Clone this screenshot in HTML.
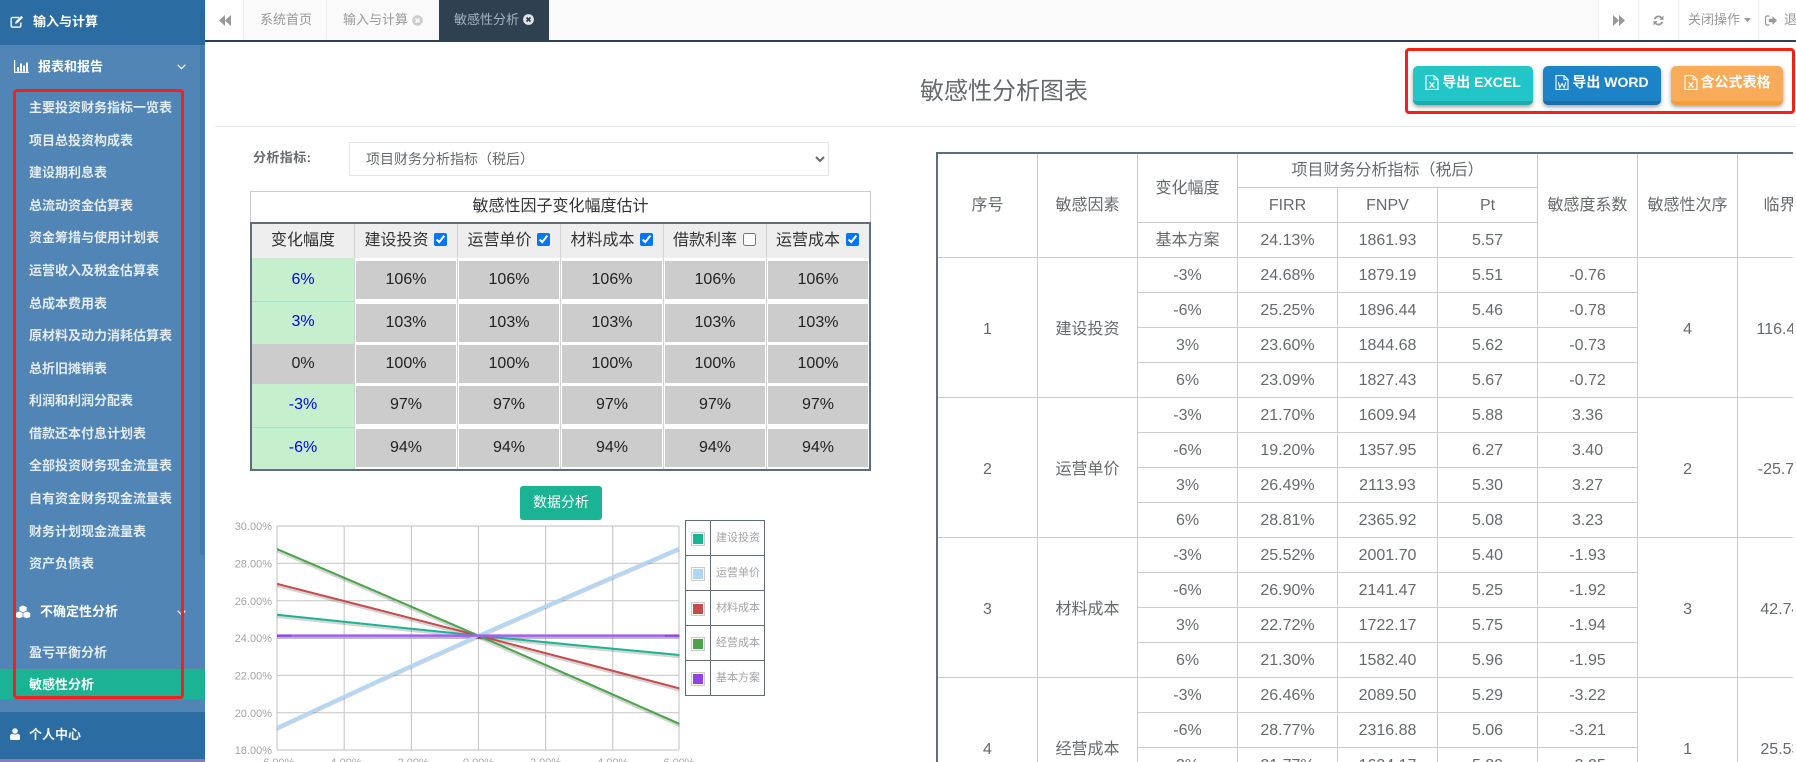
<!DOCTYPE html>
<html lang="zh"><head><meta charset="utf-8"><title>敏感性分析图表</title>
<style>
*{box-sizing:border-box}
html,body{margin:0;padding:0;width:1796px;height:762px;overflow:hidden}
body{position:relative;background:#fff;font-family:"Liberation Sans","Noto Sans CJK SC",sans-serif;color:#676a6c}
#root{position:absolute;left:0;top:0;width:1796px;height:762px;overflow:hidden;background:#fff}
.a{position:absolute;white-space:nowrap}
#side{position:absolute;left:0;top:0;width:205px;height:762px;background:#5185b5;overflow:hidden}
#side .blk{position:absolute;left:0;width:205px;background:#2b6ca3}
#side .t{position:absolute;white-space:nowrap;font-size:13px;font-weight:700;line-height:32px;height:32px;color:#e3ebf3}
#side .w{color:#fff}
#tabs{position:absolute;left:205px;top:0;width:1591px;height:42px;background:#fafafa;border-bottom:2px solid #2f4050}
.tb{position:absolute;top:0;height:40px;line-height:39px;font-size:13px;color:#999;white-space:nowrap}
.tbb{background:#fff;border-left:1px solid #eee}
.btn{position:absolute;top:66px;height:39px;border-radius:5px;color:#fff;font-size:14px;font-weight:700;display:flex;align-items:center;justify-content:center;gap:3px;padding-bottom:3px;box-shadow:0 2px 4px rgba(0,0,0,.38)}
.redbox{position:absolute;border:3px solid #f5201a;border-radius:4px;pointer-events:none}
.c{position:absolute;text-align:center;font-size:16px;color:#222}
.g{background:#ccc}
.gr{background:#c6efce;color:#00f}
.r1{top:261px;height:38px;line-height:38px}
.r2{top:304px;height:38px;line-height:38px}
.r3{top:345px;height:38px;line-height:38px}
.r4{top:386px;height:38px;line-height:38px}
.r5{top:429px;height:38px;line-height:38px}
.k1{left:356px;width:100px}.k2{left:459px;width:100px}.k3{left:562px;width:100px}.k4{left:665px;width:100px}.k5{left:768px;width:100px}
.f1{left:252px;width:102px;top:258px;height:43px;line-height:43px}
.f2{left:252px;width:102px;top:301px;height:43px;line-height:42px}
.f3{left:252px;width:102px;top:344px;height:40px;line-height:39px}
.f4{left:252px;width:102px;top:384px;height:43px;line-height:42px}
.f5{left:252px;width:102px;top:427px;height:42px;line-height:42px}
.vl{position:absolute;width:1px;top:224px;height:245px;background:#d4d4d4}
.hd{position:absolute;top:224px;height:34px;line-height:33px;font-size:16px;color:#333;white-space:nowrap}
input[type=checkbox]{position:absolute;margin:0;width:13px;height:13px;top:233px}
#rw{position:absolute;left:936px;top:152px;width:857px;height:610px;overflow:hidden}
#rt{position:absolute;left:0;top:0;width:900.500px;border-collapse:collapse;table-layout:fixed;border-top:2px solid #5f6c7b;border-left:2px solid #5f6c7b;font-size:16px;color:#676a6c}
#rt td{border:1px solid #ccc;text-align:center;padding:2px 0 0;height:35px;line-height:20px;overflow:hidden;white-space:nowrap}
#rt td[rowspan="4"]{padding-top:5px}
#rt tr:first-child td{height:34px;border-top:0}
#lg{position:absolute;left:685px;top:520px;width:80px;height:176px;border:1px solid #5f6c7b}
#lg .row{position:absolute;left:0;width:78px;height:35px;border-bottom:1px solid #5f6c7b;font-size:11px;color:#a5a5a5;line-height:34px}
#lg .row:last-child{border-bottom:0}
#lg .row span{position:absolute;left:30px;white-space:nowrap}
#lg .sw{position:absolute;left:5px;top:11px;width:14px;height:14px;border:1px solid #ccc;padding:1px;background:#fff}
#lg .sw i{display:block;width:10px;height:10px}
</style></head><body>
<div id="root">

<div id="side">
  <div class="blk" style="top:0;height:45px"></div>
  <div class="blk" style="top:712px;height:47px"></div>
  <div style="position:absolute;left:0;top:759px;width:205px;height:3px;background:#8a7ab8"></div>
  <div style="position:absolute;left:200px;top:11px;width:4px;height:544px;background:rgba(40,80,120,.22);border-radius:2px"></div>
  <div style="position:absolute;left:0;top:669px;width:205px;height:30px;background:#1ab394"></div>

  <svg class="a" style="left:10px;top:15px" width="14" height="13" viewBox="0 0 14 13"><path d="M9 2.500H2.500a1.300 1.300 0 0 0-1.300 1.300v7a1.300 1.300 0 0 0 1.300 1.300h7a1.300 1.300 0 0 0 1.300-1.300V7.500" fill="none" stroke="#eef3f8" stroke-width="1.500"/><path d="M5 8.800l.6-2.400L11.300.8l1.800 1.800-5.700 5.600z" fill="#eef3f8"/></svg>
  <div class="t w" style="left:33px;top:6px">输入与计算</div>

  <svg class="a" style="left:14px;top:60px" width="15" height="13" viewBox="0 0 15 13"><path d="M.6 0v12.300H15" fill="none" stroke="#fff" stroke-width="1.200"/><path d="M3 7h2v4.500H3zM6 3.500h2v8H6zM9 5.500h2v6H9zM12 2.500h2v9h-2z" fill="#fff"/></svg>
  <div class="t w" style="left:38px;top:51px">报表和报告</div>
  <svg class="a" style="left:177px;top:64px" width="9" height="6" viewBox="0 0 9 6"><path d="M.7.8l3.800 3.800L8.300.8" fill="none" stroke="#eef3f8" stroke-width="1.300"/></svg>

  <div class="t" style="left:29px;top:92px">主要投资财务指标一览表</div>
  <div class="t" style="left:29px;top:124.6px">项目总投资构成表</div>
  <div class="t" style="left:29px;top:157.2px">建设期利息表</div>
  <div class="t" style="left:29px;top:189.8px">总流动资金估算表</div>
  <div class="t" style="left:29px;top:222.3px">资金筹措与使用计划表</div>
  <div class="t" style="left:29px;top:254.9px">运营收入及税金估算表</div>
  <div class="t" style="left:29px;top:287.5px">总成本费用表</div>
  <div class="t" style="left:29px;top:320.1px">原材料及动力消耗估算表</div>
  <div class="t" style="left:29px;top:352.7px">总折旧摊销表</div>
  <div class="t" style="left:29px;top:385.3px">利润和利润分配表</div>
  <div class="t" style="left:29px;top:417.8px">借款还本付息计划表</div>
  <div class="t" style="left:29px;top:450.4px">全部投资财务现金流量表</div>
  <div class="t" style="left:29px;top:483px">自有资金财务现金流量表</div>
  <div class="t" style="left:29px;top:515.6px">财务计划现金流量表</div>
  <div class="t" style="left:29px;top:547.500px">资产负债表</div>

  <svg class="a" style="left:15px;top:605px" width="16" height="14" viewBox="0 0 16 14"><path d="M8 .5l3.600 1.500v3.800L8 7.300 4.400 5.800V2z" fill="#fff"/><path d="M4.200 6.500l3.400 1.400v4L4.200 13.400.8 11.900v-4z" fill="#fff"/><path d="M11.800 6.500l3.400 1.400v4l-3.400 1.500-3.400-1.500v-4z" fill="#fff"/></svg>
  <div class="t w" style="left:40px;top:596px">不确定性分析</div>
  <svg class="a" style="left:177px;top:610px" width="9" height="6" viewBox="0 0 9 6"><path d="M.7.8l3.800 3.800L8.300.8" fill="none" stroke="#eef3f8" stroke-width="1.300"/></svg>

  <div class="t" style="left:29px;top:636.500px">盈亏平衡分析</div>
  <div class="t w" style="left:29px;top:668.500px">敏感性分析</div>

  <svg class="a" style="left:10px;top:728px" width="10" height="12" viewBox="0 0 10 12"><circle cx="5" cy="3" r="2.800" fill="#f2f5f9"/><path d="M0 11V8.200C0 6.700 1.200 5.800 2.500 5.600c.7.6 1.500.9 2.500.9s1.800-.3 2.500-.9C8.800 5.800 10 6.700 10 8.200V11c0 .6-.5 1-1 1H1c-.5 0-1-.4-1-1z" fill="#f2f5f9"/></svg>
  <div class="t" style="left:29px;top:719px;color:#eef3f8">个人中心</div>
</div>
<div class="redbox" style="left:13px;top:89px;width:171px;height:610px;z-index:5"></div>

<div id="tabs"></div>
<div class="tb" style="left:205px;width:39px;background:#fff;border-right:1px solid #eee">
  <svg class="a" style="left:14px;top:15px" width="12" height="11" viewBox="0 0 12 11"><path d="M6 0v11L0 5.500zM12 0v11L6 5.500z" fill="#999"/></svg>
</div>
<div class="tb" style="left:244px;width:83px;border-right:1px solid #eee;padding-left:16px;color:#999">系统首页</div>
<div class="tb" style="left:327px;width:112px;padding-left:16px;color:#999">输入与计算
  <svg class="a" style="left:85px;top:15px" width="11" height="11" viewBox="0 0 11 11"><circle cx="5.500" cy="5.500" r="5.300" fill="#ccc"/><path d="M3.500 3.500l4 4M7.500 3.500l-4 4" stroke="#fafafa" stroke-width="1.600"/></svg>
</div>
<div class="tb" style="left:439px;width:110px;background:#2f4050;padding-left:15px;color:#a7b1c2">敏感性分析
  <svg class="a" style="left:84px;top:14px" width="11" height="11" viewBox="0 0 11 11"><circle cx="5.500" cy="5.500" r="5.400" fill="#e0e4ea"/><path d="M3.500 3.500l4 4M7.500 3.500l-4 4" stroke="#2f4050" stroke-width="1.700"/></svg>
</div>
<div class="tb tbb" style="left:1598px;width:40px">
  <svg class="a" style="left:14px;top:15px" width="12" height="11" viewBox="0 0 12 11"><path d="M0 0v11l6-5.500zM6 0v11l6-5.500z" fill="#999"/></svg>
</div>
<div class="tb tbb" style="left:1638px;width:40px">
  <svg class="a" style="left:13px;top:14px" width="13" height="13" viewBox="0 0 13 13"><path d="M1.800 5.200A4.900 4.900 0 0 1 10.100 3l1.400-1.400v4.300H7.200l1.600-1.600A3.100 3.100 0 0 0 3.700 5.200zM11.200 7.800A4.900 4.900 0 0 1 2.900 10l-1.400 1.400V7.100h4.300L4.200 8.700a3.100 3.100 0 0 0 5.100-.9z" fill="#999"/></svg>
</div>
<div class="tb tbb" style="left:1678px;width:80px;padding-left:9px">关闭操作<svg class="a" style="left:65px;top:18px" width="7" height="4" viewBox="0 0 7 4"><path d="M0 0h7L3.500 4z" fill="#999"/></svg></div>
<div class="tb tbb" style="left:1758px;width:38px;padding-left:25px">
  <svg class="a" style="left:6px;top:15px" width="12" height="11" viewBox="0 0 12 11"><path d="M4.500 1H2a1.500 1.500 0 0 0-1.500 1.500v6A1.500 1.500 0 0 0 2 10h2.500" fill="none" stroke="#999" stroke-width="1.200"/><path d="M3.800 3.800h3.700V1.200L12 5.500 7.500 9.800V7.200H3.800z" fill="#999"/></svg>退出
</div>

<div class="a" style="left:920px;top:74px;font-size:24px;line-height:36px;color:#676a6c">敏感性分析图表</div>

<div class="btn" style="left:1413px;width:120px;background:#23c6c8;border-bottom:4px solid #1ea9ab">
  <svg width="14" height="15" viewBox="0 0 14 15"><path d="M1 .6h8l4 4v9.800H1zM9 .6v4h4" fill="none" stroke="#fff" stroke-width="1.100"/><path d="M4.600 7.200l4.600 5.400M9.200 7.200l-4.600 5.400" stroke="#fff" stroke-width="1.300"/></svg><span>导出 EXCEL</span>
</div>
<div class="btn" style="left:1543px;width:118px;background:#1c84c6;border-bottom:4px solid #1a6fa8">
  <svg width="14" height="15" viewBox="0 0 14 15"><path d="M1 .6h8l4 4v9.800H1zM9 .6v4h4" fill="none" stroke="#fff" stroke-width="1.100"/><path d="M3.300 7.200l1.500 5.400 2.200-4 2.200 4 1.500-5.400" fill="none" stroke="#fff" stroke-width="1.100"/></svg><span>导出 WORD</span>
</div>
<div class="btn" style="left:1671px;width:112px;background:#f8ac59;border-bottom:4px solid #f79d3c">
  <svg width="14" height="15" viewBox="0 0 14 15"><path d="M1 .6h8l4 4v9.800H1zM9 .6v4h4" fill="none" stroke="#fff" stroke-width="1.100"/><path d="M4.600 7.200l4.600 5.400M9.200 7.200l-4.600 5.400" stroke="#fff" stroke-width="1.300"/></svg><span>含公式表格</span>
</div>
<div class="redbox" style="left:1405px;top:48px;width:390px;height:66px"></div>

<div style="position:absolute;left:215px;top:126px;width:1581px;height:1px;background:#e7eaec"></div>

<div class="a" style="left:253px;top:148px;font-size:13px;font-weight:700;line-height:20px;color:#676a6c;letter-spacing:.4px">分析指标:</div>
<select style="position:absolute;left:349px;top:142px;width:480px;height:34px;border:1px solid #e5e6e7;background:#fff;border-radius:0;font:14px 'Liberation Sans','Noto Sans CJK SC',sans-serif;color:#676a6c;padding-left:12px;outline:0">
  <option>项目财务分析指标（税后）</option>
</select>

<!-- estimate table -->
<div style="position:absolute;left:250px;top:191px;width:621px;height:32px;border:1px solid #ccc;border-bottom:0"></div>
<div class="a" style="left:250px;width:621px;top:194px;text-align:center;font-size:16px;line-height:26px;color:#333">敏感性因子变化幅度估计</div>
<div style="position:absolute;left:250px;top:222px;width:621px;height:249px;border:2px solid #5f6c7b"></div>
<div style="position:absolute;left:252px;top:224px;width:617px;height:34px;background:#eee"></div>
<div class="vl" style="left:354px"></div><div class="vl" style="left:457px"></div><div class="vl" style="left:560px"></div><div class="vl" style="left:663px"></div><div class="vl" style="left:766px"></div>
<div class="hd" style="left:271px">变化幅度</div>
<div class="hd" style="left:364.500px">建设投资</div><input type="checkbox" checked style="left:434px">
<div class="hd" style="left:467.500px">运营单价</div><input type="checkbox" checked style="left:537px">
<div class="hd" style="left:570.500px">材料成本</div><input type="checkbox" checked style="left:640px">
<div class="hd" style="left:673px">借款利率</div><input type="checkbox" style="left:743px">
<div class="hd" style="left:776px">运营成本</div><input type="checkbox" checked style="left:846px">

<div class="c gr f1">6%</div><div class="c gr f2">3%</div><div class="c g f3">0%</div><div class="c gr f4">-3%</div><div class="c gr f5">-6%</div>
<div style="position:absolute;left:252px;top:301px;width:102px;height:1px;background:#ccc"></div>
<div style="position:absolute;left:252px;top:427px;width:102px;height:1px;background:#ccc"></div>

<div class="c g r1 k1">106%</div><div class="c g r1 k2">106%</div><div class="c g r1 k3">106%</div><div class="c g r1 k4">106%</div><div class="c g r1 k5">106%</div>
<div class="c g r2 k1">103%</div><div class="c g r2 k2">103%</div><div class="c g r2 k3">103%</div><div class="c g r2 k4">103%</div><div class="c g r2 k5">103%</div>
<div class="c g r3 k1">100%</div><div class="c g r3 k2">100%</div><div class="c g r3 k3">100%</div><div class="c g r3 k4">100%</div><div class="c g r3 k5">100%</div>
<div class="c g r4 k1">97%</div><div class="c g r4 k2">97%</div><div class="c g r4 k3">97%</div><div class="c g r4 k4">97%</div><div class="c g r4 k5">97%</div>
<div class="c g r5 k1">94%</div><div class="c g r5 k2">94%</div><div class="c g r5 k3">94%</div><div class="c g r5 k4">94%</div><div class="c g r5 k5">94%</div>

<div class="a" style="left:520px;top:486px;width:82px;height:34px;background:#1ab394;border-radius:3px;color:#fff;font-size:14px;line-height:33px;text-align:center">数据分析</div>

<!-- chart -->
<svg style="position:absolute;left:0;top:0" width="1796" height="762" font-family="'Liberation Sans',sans-serif">
  <g stroke="#ccc" stroke-width="1.200" fill="none">
    <path d="M277 526H679M277 563.300H679M277 600.700H679M277 638H679M277 675.300H679M277 712.700H679M277 750H679"/>
    <path d="M277 526V750M344.200 526V750M411.400 526V750M478.500 526V750M545.600 526V750M612.700 526V750M679 526V750"/>
  </g>
  <g fill="#a5a5a5" font-size="11" text-anchor="end">
    <text x="272" y="530">30.00%</text><text x="272" y="567.500">28.00%</text><text x="272" y="604.800">26.00%</text><text x="272" y="642.100">24.00%</text><text x="272" y="679.400">22.00%</text><text x="272" y="716.800">20.00%</text><text x="272" y="754.100">18.00%</text>
  </g>
  <g fill="#a5a5a5" font-size="11" text-anchor="middle">
    <text x="277" y="766">-6.00%</text><text x="344.200" y="766">-4.00%</text><text x="411.400" y="766">-2.00%</text><text x="478.500" y="766">0.00%</text><text x="545.600" y="766">2.00%</text><text x="612.700" y="766">4.00%</text><text x="679" y="766">6.00%</text>
  </g>
  <defs>
    <clipPath id="cp"><rect x="277" y="526" width="402.500" height="224"/></clipPath>
  </defs>
  <g clip-path="url(#cp)" fill="none">
    <g stroke="#000" stroke-opacity=".17" stroke-width="2.500" transform="translate(0 2)">
      <path d="M277 614.700L377.600 625.300L478.300 635.600L579 645.500L679.500 655"/>
      <path d="M277 727.600L377.600 680.900L478.300 635.600L579 591.500L679.500 548.200"/>
      <path d="M277 583.900L377.600 609.600L478.300 635.600L579 661.900L679.500 688.400"/>
      <path d="M277 549L377.600 592.100L478.300 635.600L579 679.600L679.500 723.900"/>
      <path d="M277 635.600H679.500"/>
    </g>
    <path d="M277 614.700L377.600 625.300L478.300 635.600L579 645.500L679.500 655" stroke="#1ab394" stroke-width="2"/>
    <path d="M277 727.600L377.600 680.900L478.300 635.600L579 591.500L679.500 548.200" stroke="#b1d6f6" stroke-width="3.200"/>
    <path d="M277 583.900L377.600 609.600L478.300 635.600L579 661.900L679.500 688.400" stroke="#c94a4a" stroke-width="2"/>
    <path d="M277 549L377.600 592.100L478.300 635.600L579 679.600L679.500 723.900" stroke="#4aa54a" stroke-width="2"/>
    <path d="M277 635.600H679.500" stroke="#a45ff0" stroke-width="2.500"/>
    <path d="M277 635.800H291.500M665 635.800H679.500" stroke="#9440ed" stroke-width="2"/>
  </g>
</svg>

<div id="lg">
  <div class="row" style="top:0"><div class="sw"><i style="background:#1ab394"></i></div><span>建设投资</span></div>
  <div class="row" style="top:35px"><div class="sw"><i style="background:#afd5f7"></i></div><span>运营单价</span></div>
  <div class="row" style="top:70px"><div class="sw"><i style="background:#c94a4a"></i></div><span>材料成本</span></div>
  <div class="row" style="top:105px"><div class="sw"><i style="background:#4aa54a"></i></div><span>经营成本</span></div>
  <div class="row" style="top:140px"><div class="sw"><i style="background:#9440ed"></i></div><span>基本方案</span></div>
  <div style="position:absolute;left:24px;top:0;width:1px;height:174px;background:#5f6c7b"></div>
</div>

<div id="rw">
<table id="rt">
<colgroup><col style="width:100.500px"><col style="width:100px"><col style="width:100px"><col style="width:100px"><col style="width:100px"><col style="width:100px"><col style="width:100px"><col style="width:100px"><col style="width:100px"></colgroup>
<tr><td rowspan="3">序号</td><td rowspan="3">敏感因素</td><td rowspan="2">变化幅度</td><td colspan="3">项目财务分析指标（税后）</td><td rowspan="3">敏感度系数</td><td rowspan="3">敏感性次序</td><td rowspan="3">临界点</td></tr>
<tr><td>FIRR</td><td>FNPV</td><td>Pt</td></tr>
<tr><td>基本方案</td><td>24.13%</td><td>1861.93</td><td>5.57</td></tr>
<tr><td rowspan="4">1</td><td rowspan="4">建设投资</td><td>-3%</td><td>24.68%</td><td>1879.19</td><td>5.51</td><td>-0.76</td><td rowspan="4">4</td><td rowspan="4">116.45%</td></tr>
<tr><td>-6%</td><td>25.25%</td><td>1896.44</td><td>5.46</td><td>-0.78</td></tr>
<tr><td>3%</td><td>23.60%</td><td>1844.68</td><td>5.62</td><td>-0.73</td></tr>
<tr><td>6%</td><td>23.09%</td><td>1827.43</td><td>5.67</td><td>-0.72</td></tr>
<tr><td rowspan="4">2</td><td rowspan="4">运营单价</td><td>-3%</td><td>21.70%</td><td>1609.94</td><td>5.88</td><td>3.36</td><td rowspan="4">2</td><td rowspan="4">-25.71%</td></tr>
<tr><td>-6%</td><td>19.20%</td><td>1357.95</td><td>6.27</td><td>3.40</td></tr>
<tr><td>3%</td><td>26.49%</td><td>2113.93</td><td>5.30</td><td>3.27</td></tr>
<tr><td>6%</td><td>28.81%</td><td>2365.92</td><td>5.08</td><td>3.23</td></tr>
<tr><td rowspan="4">3</td><td rowspan="4">材料成本</td><td>-3%</td><td>25.52%</td><td>2001.70</td><td>5.40</td><td>-1.93</td><td rowspan="4">3</td><td rowspan="4">42.74%</td></tr>
<tr><td>-6%</td><td>26.90%</td><td>2141.47</td><td>5.25</td><td>-1.92</td></tr>
<tr><td>3%</td><td>22.72%</td><td>1722.17</td><td>5.75</td><td>-1.94</td></tr>
<tr><td>6%</td><td>21.30%</td><td>1582.40</td><td>5.96</td><td>-1.95</td></tr>
<tr><td rowspan="4">4</td><td rowspan="4">经营成本</td><td>-3%</td><td>26.46%</td><td>2089.50</td><td>5.29</td><td>-3.22</td><td rowspan="4">1</td><td rowspan="4">25.53%</td></tr>
<tr><td>-6%</td><td>28.77%</td><td>2316.88</td><td>5.06</td><td>-3.21</td></tr>
<tr><td>3%</td><td>21.77%</td><td>1634.17</td><td>5.80</td><td>-3.25</td></tr>
<tr><td>6%</td><td>19.40%</td><td>1407.00</td><td>6.20</td><td>-3.28</td></tr>
</table>
</div>
</div>
</body></html>
